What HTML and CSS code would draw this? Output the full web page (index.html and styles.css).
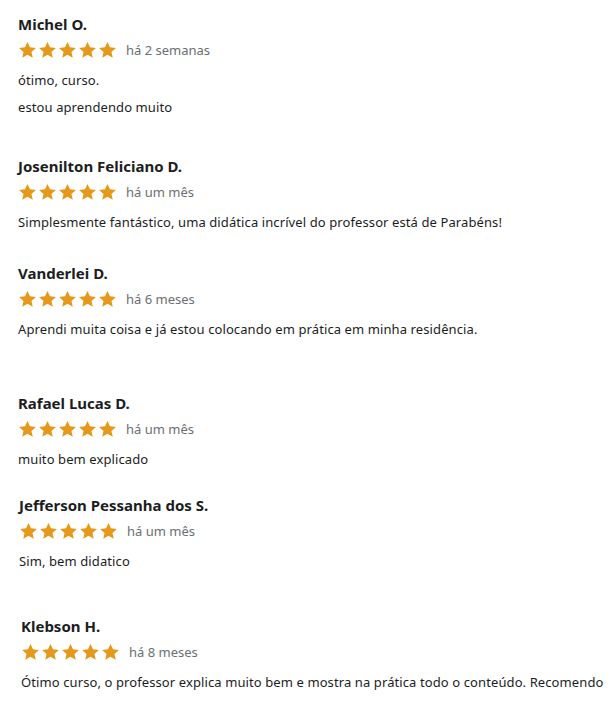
FILE: index.html
```html
<!DOCTYPE html>
<html lang="pt-BR">
  <head>
    <meta name="viewport" content="width=device-width, initial-scale=1.0" />
    <title>Avaliações</title>
    <link rel="stylesheet" href="styles.css">
  </head>
  <body>
    <svg width="0" height="0" class="defs">
      <defs>
        <symbol id="star" viewBox="0 0 24 24">
          <path d="M12 1.2l3.3 7.2 7.9.8-5.9 5.3 1.7 7.8L12 18.3l-7 4 1.7-7.8L.8 9.2l7.9-.8z" />
        </symbol>
      </defs>
    </svg>
    <div class="reviews">
      <div class="review">
        <h3 class="name">Michel O.</h3>
        <div class="rating">
          <span class="stars"><svg><use href="#star"/></svg><svg><use href="#star"/></svg><svg><use href="#star"/></svg><svg><use href="#star"/></svg><svg><use href="#star"/></svg></span>
          <span class="when">há 2 semanas</span>
        </div>
        <p class="text">ótimo, curso.</p>
        <p class="text">estou aprendendo muito</p>
      </div>
      <div class="review gap-39">
        <h3 class="name">Josenilton Feliciano D.</h3>
        <div class="rating">
          <span class="stars"><svg><use href="#star"/></svg><svg><use href="#star"/></svg><svg><use href="#star"/></svg><svg><use href="#star"/></svg><svg><use href="#star"/></svg></span>
          <span class="when">há um mês</span>
        </div>
        <p class="text">Simplesmente fantástico, uma didática incrível do professor está de Parabéns!</p>
      </div>
      <div class="review gap-31">
        <h3 class="name">Vanderlei D.</h3>
        <div class="rating">
          <span class="stars"><svg><use href="#star"/></svg><svg><use href="#star"/></svg><svg><use href="#star"/></svg><svg><use href="#star"/></svg><svg><use href="#star"/></svg></span>
          <span class="when">há 6 meses</span>
        </div>
        <p class="text">Aprendi muita coisa e já estou colocando em prática em minha residência.</p>
      </div>
      <div class="review gap-54">
        <h3 class="name">Rafael Lucas D.</h3>
        <div class="rating">
          <span class="stars"><svg><use href="#star"/></svg><svg><use href="#star"/></svg><svg><use href="#star"/></svg><svg><use href="#star"/></svg><svg><use href="#star"/></svg></span>
          <span class="when">há um mês</span>
        </div>
        <p class="text">muito bem explicado</p>
      </div>
      <div class="review gap-26 shift-1">
        <h3 class="name">Jefferson Pessanha dos S.</h3>
        <div class="rating">
          <span class="stars"><svg><use href="#star"/></svg><svg><use href="#star"/></svg><svg><use href="#star"/></svg><svg><use href="#star"/></svg><svg><use href="#star"/></svg></span>
          <span class="when">há um mês</span>
        </div>
        <p class="text">Sim, bem didatico</p>
      </div>
      <div class="review gap-45 shift-3">
        <h3 class="name">Klebson H.</h3>
        <div class="rating">
          <span class="stars"><svg><use href="#star"/></svg><svg><use href="#star"/></svg><svg><use href="#star"/></svg><svg><use href="#star"/></svg><svg><use href="#star"/></svg></span>
          <span class="when">há 8 meses</span>
        </div>
        <p class="text">Ótimo curso, o professor explica muito bem e mostra na prática todo o conteúdo. Recomendo</p>
      </div>
    </div>
  </body>
</html>
```

FILE: styles.css
```css
* {
  margin: 0;
  padding: 0;
  box-sizing: border-box;
}
body {
  background-color: #ffffff;
  font-family: "Noto Sans", "Open Sans", sans-serif;
  color: #1c1d1f;
  overflow: hidden;
}
.defs {
  position: absolute;
}
.reviews {
  padding: 14px 0 0 18px;
}
.review.gap-26 { margin-top: 26px; }
.review.gap-31 { margin-top: 31px; }
.review.gap-39 { margin-top: 39px; }
.review.gap-45 { margin-top: 45px; }
.review.gap-54 { margin-top: 54px; }
.review.shift-1 { padding-left: 1px; }
.review.shift-3 { padding-left: 3px; }
.name {
  font-size: 15px;
  font-weight: 700;
  line-height: 20px;
}
.rating {
  display: flex;
  align-items: center;
  gap: 9px;
  height: 20px;
  margin-top: 6px;
}
.stars {
  display: flex;
  gap: 1px;
}
.stars svg {
  width: 19px;
  height: 18px;
  fill: #e59819;
}
.when {
  font-size: 13px;
  color: #6a6f73;
}
.text {
  font-size: 13px;
  line-height: 20px;
  margin-top: 10px;
  white-space: nowrap;
  letter-spacing: 0.1px;
}
.text + .text {
  margin-top: 7px;
}
```
